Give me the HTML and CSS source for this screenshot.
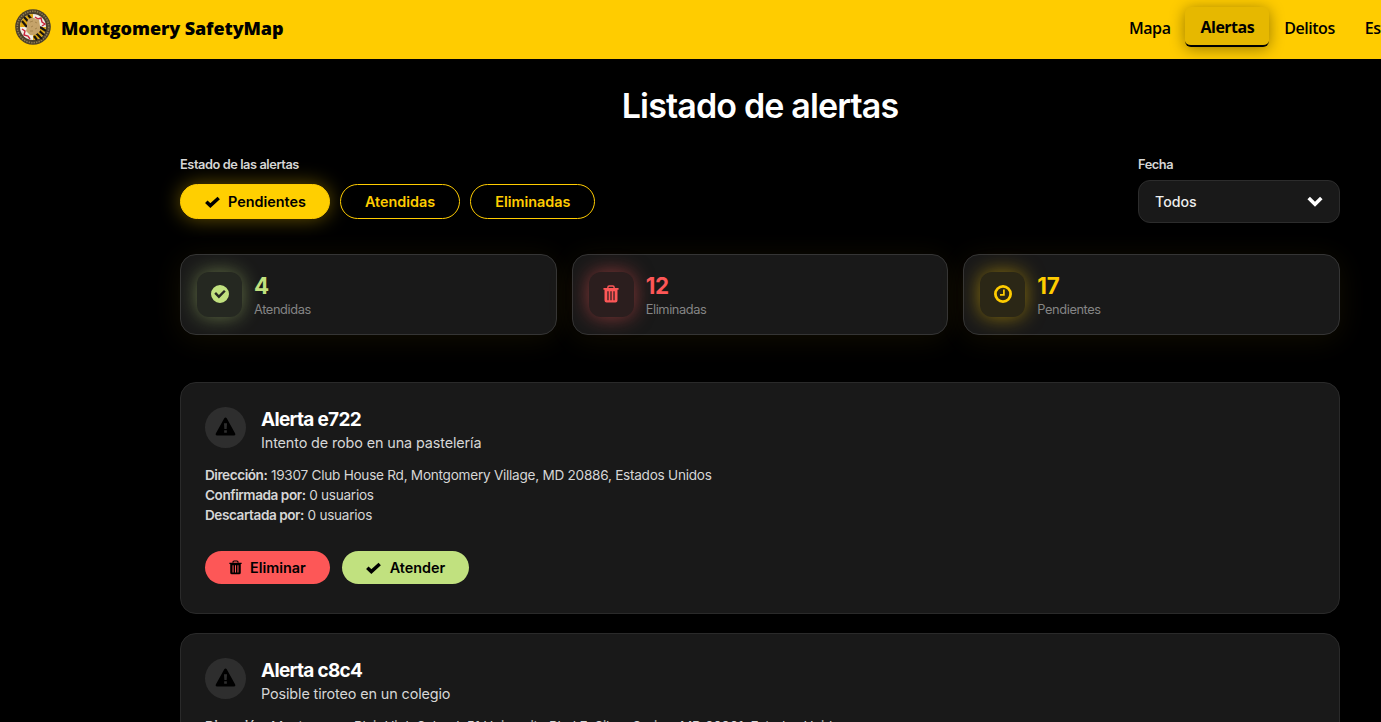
FILE: index.html
```html
<!DOCTYPE html>
<html lang="es">
<head>
    <meta charset="UTF-8">
    <meta name="viewport" content="width=device-width, initial-scale=1.0">
    <title>Montgomery SafetyMap</title>
    <link rel="stylesheet" href="styles.css">
</head>
<body>
    <!-- Iconos reutilizables -->
    <svg class="sprite" width="0" height="0">
        <symbol id="check" viewBox="0 0 14 11">
            <path d="M1.2 5.2 L5 8.8 L12.8 1.8" fill="none" stroke="currentColor" stroke-width="3.3"/>
        </symbol>
        <symbol id="trash" viewBox="0 0 18 20">
            <path d="M5.5 3.5 V2.4 Q5.5 1 7 1 H11 Q12.5 1 12.5 2.4 V3.5" fill="none" stroke="currentColor" stroke-width="1.6"/>
            <path fill="currentColor" fill-rule="evenodd" d="M.5 3.3 H17.5 V5.2 H16.3 V17.2 Q16.3 19.5 14 19.5 H4 Q1.7 19.5 1.7 17.2 V5.2 H.5Z M4.9 7 V17 H6.3 V7Z M8.3 7 V17 H9.7 V7Z M11.7 7 V17 H13.1 V7Z"/>
        </symbol>
        <symbol id="circle-check" viewBox="0 0 18 18">
            <path fill="currentColor" fill-rule="evenodd" d="M9 0 A9 9 0 1 1 9 18 A9 9 0 1 1 9 0Z M3.3 8.8 L7.9 13.4 L14.7 6.6 L13 4.9 L7.9 10 L5 7.1Z"/>
        </symbol>
        <symbol id="clock" viewBox="0 0 18 18">
            <circle cx="9" cy="9" r="7.6" fill="none" stroke="currentColor" stroke-width="2.8"/>
            <path d="M9.9 4.6 V9.8 H6" fill="none" stroke="currentColor" stroke-width="1.7"/>
        </symbol>
        <symbol id="warning" viewBox="0 0 22 20">
            <path fill="currentColor" fill-rule="evenodd" d="M11 .4 Q11.8 .4 12.3 1.3 L21.2 17.4 Q22 19.6 20 19.6 H2 Q0 19.6 .8 17.4 L9.7 1.3 Q10.2 .4 11 .4Z M9.4 6.5 L9.8 12.6 H12.2 L12.6 6.5Z M9.6 14 V16.6 H12.4 V14Z"/>
        </symbol>
    </svg>

    <header class="navbar">
        <div class="brand">
            <svg class="logo" viewBox="0 0 36 36">
                <circle cx="18" cy="18" r="17.8" fill="#4c402a"/>
                <circle cx="18" cy="18" r="15.7" fill="none" stroke="#8f7b52" stroke-width="1.6" stroke-dasharray="1.4 1.1"/>
                <circle cx="18" cy="18" r="13" fill="#f1ece2"/>
                <path d="M18 5 A13 13 0 0 0 5 18 H18Z" fill="#dba510"/>
                <path d="M18 18 H31 A13 13 0 0 1 18 31Z" fill="#dba510"/>
                <path d="M7 12 L12 18 M9 8 L18 18 M13 6 L18 12 M19 22 L27 30 M21 19 L29 26 M25 18 L31 22 M19 27 L22 31" stroke="#17130d" stroke-width="2.2"/>
                <path d="M20 8 L23 10 L26 9 L27 13 L30 15 L27 17 M7 20 L10 22 L9 26 L13 27 L15 30" fill="none" stroke="#c9243b" stroke-width="1.4"/>
                <path d="M12 13 Q14 8 19 9 L24 11 L25 17 L25 22 Q21 27 15 26 L11 22 L12 18Z" fill="#c5a36a"/>
                <path d="M15 13 L18 12 M20 13 L22 14 M16 18 L18 17 M20 20 L22 19 M15 22 L18 22" fill="none" stroke="#a5854e" stroke-width="1"/>
            </svg>
            <span class="brand-name">Montgomery SafetyMap</span>
        </div>
        <nav class="menu">
            <a class="link">Mapa</a>
            <a class="link active">Alertas</a>
            <a class="link">Delitos</a>
            <a class="link">Estadísticas</a>
        </nav>
    </header>

    <main class="container">
        <h1>Listado de alertas</h1>

        <div class="filters">
            <div>
                <p class="label">Estado de las alertas</p>
                <div class="tabs">
                    <button class="tab selected"><svg class="i-check"><use href="#check"/></svg>Pendientes</button>
                    <button class="tab">Atendidas</button>
                    <button class="tab">Eliminadas</button>
                </div>
            </div>
            <div class="date">
                <p class="label">Fecha</p>
                <div class="select">
                    <span>Todos</span>
                    <svg width="16" height="11" viewBox="0 0 16 11"><path d="M1.7 2 L8 8.2 L14.3 2" fill="none" stroke="#fff" stroke-width="3.6"/></svg>
                </div>
            </div>
        </div>

        <div class="stats">
            <div class="stat green">
                <div class="stat-icon"><svg width="18" height="18"><use href="#circle-check"/></svg></div>
                <div><div class="number">4</div><div class="name">Atendidas</div></div>
            </div>
            <div class="stat red">
                <div class="stat-icon"><svg width="16" height="18"><use href="#trash"/></svg></div>
                <div><div class="number">12</div><div class="name">Eliminadas</div></div>
            </div>
            <div class="stat yellow">
                <div class="stat-icon"><svg width="18" height="18"><use href="#clock"/></svg></div>
                <div><div class="number">17</div><div class="name">Pendientes</div></div>
            </div>
        </div>

        <section class="card">
            <div class="card-head">
                <div class="circle"><svg width="21" height="19"><use href="#warning"/></svg></div>
                <div class="card-title">
                    <h2>Alerta e722</h2>
                    <p class="desc">Intento de robo en una pastelería</p>
                </div>
            </div>
            <div class="info">
                <p><b>Dirección:</b> 19307 Club House Rd, Montgomery Village, MD 20886, Estados Unidos</p>
                <p><b>Confirmada por:</b> 0 usuarios</p>
                <p><b>Descartada por:</b> 0 usuarios</p>
            </div>
            <div class="actions">
                <button class="btn delete"><svg class="i-trash"><use href="#trash"/></svg>Eliminar</button>
                <button class="btn attend"><svg class="i-check"><use href="#check"/></svg>Atender</button>
            </div>
        </section>

        <section class="card">
            <div class="card-head">
                <div class="circle"><svg width="21" height="19"><use href="#warning"/></svg></div>
                <div class="card-title">
                    <h2>Alerta c8c4</h2>
                    <p class="desc">Posible tiroteo en un colegio</p>
                </div>
            </div>
            <div class="info">
                <p><b>Dirección:</b> Montgomery Blair High School, 51 University Blvd E, Silver Spring, MD 20901, Estados Unidos</p>
                <p><b>Confirmada por:</b> 0 usuarios</p>
                <p><b>Descartada por:</b> 0 usuarios</p>
            </div>
            <div class="actions">
                <button class="btn delete"><svg class="i-trash"><use href="#trash"/></svg>Eliminar</button>
                <button class="btn attend"><svg class="i-check"><use href="#check"/></svg>Atender</button>
            </div>
        </section>
    </main>
</body>
</html>
```

FILE: styles.css
```css
* {
    box-sizing: border-box;
    margin: 0;
    padding: 0;
}

html {
    height: 100%;
    overflow: hidden;
    background: #000;
}

body {
    width: 1520px;
    height: 100%;
    overflow: hidden;
    background: #000;
    color: #d6d6d6;
    font-family: Inter, sans-serif;
}

.sprite {
    position: absolute;
}

/* Barra superior */
.navbar {
    display: flex;
    align-items: center;
    height: 59px;
    padding: 0 15px;
    background: #ffcc00;
    color: #000;
    font-family: "Open Sans", sans-serif;
}

.brand {
    display: flex;
    align-items: center;
    gap: 10px;
    width: 1099px;
    padding-bottom: 5px;
}

.logo {
    width: 36px;
    height: 36px;
}

.brand-name {
    padding-top: 2px;
    font-size: 18px;
    font-weight: 800;
    letter-spacing: -0.1px;
}

.menu {
    display: flex;
    align-items: center;
    padding-bottom: 5px;
}

.link {
    padding: 9px 15px 7px;
    font-size: 16px;
    font-weight: 600;
    letter-spacing: -0.45px;
    line-height: 22px;
}

.active {
    height: 40px;
    background: #e6b800;
    border-bottom: 2px solid #000;
    border-radius: 6px;
    box-shadow: 0 2px 15px rgba(0, 0, 0, 0.4);
    font-weight: 700;
    letter-spacing: -0.5px;
}

.container {
    width: 1160px;
    margin: 0 auto;
}

h1 {
    margin-top: 26px;
    color: #fff;
    font-size: 34px;
    font-weight: 600;
    letter-spacing: -0.85px;
    line-height: 42px;
    text-align: center;
}

/* Filtros */
.filters {
    display: flex;
    justify-content: space-between;
    margin-top: 29px;
}

.label {
    font-size: 12.8px;
    font-weight: 600;
    letter-spacing: -0.43px;
    line-height: 18px;
}

.tabs {
    display: flex;
    gap: 10px;
    margin-top: 10px;
}

.tab {
    height: 35px;
    padding: 0 24px;
    background: transparent;
    border: 1px solid #ffcc00;
    border-radius: 18px;
    color: #ffcc00;
    font: 600 14.4px Inter, sans-serif;
}

.selected {
    display: flex;
    align-items: center;
    gap: 8px;
    padding: 0 23px 0 24px;
    background: #ffcf00;
    box-shadow: 0 0 20px rgba(255, 204, 0, 0.4);
    color: #000;
}

.i-check {
    width: 15px;
    height: 12px;
}

.i-trash {
    width: 13px;
    height: 15px;
}

.date {
    width: 202px;
}

.select {
    display: flex;
    align-items: center;
    justify-content: space-between;
    height: 43px;
    margin-top: 6px;
    padding: 0 16px;
    background: #191919;
    border: 1px solid #2c2c2c;
    border-radius: 12px;
    color: #eee;
    font-size: 14.2px;
    font-weight: 500;
}

/* Contadores */
.stats {
    display: grid;
    grid-template-columns: repeat(3, 1fr);
    gap: 15px;
    margin-top: 31px;
}

.stat {
    display: flex;
    align-items: center;
    gap: 12px;
    height: 81px;
    padding: 0 16px 1px;
    background: #191919;
    border: 1px solid #353535;
    border-radius: 16px;
    box-shadow: 0 4px 30px rgba(255, 204, 0, 0.07);
}

.stat-icon {
    display: flex;
    align-items: center;
    justify-content: center;
    width: 45px;
    height: 45px;
    border-radius: 12px;
}

.number {
    padding-top: 2px;
    font-size: 22.4px;
    font-weight: 700;
    letter-spacing: -0.2px;
    line-height: 27px;
}

.name {
    margin-top: 2px;
    color: #858585;
    font-size: 12.8px;
    letter-spacing: -0.4px;
    line-height: 18px;
}

.green { color: #c1e17f; }
.red { color: #fd5757; }
.yellow { color: #ffcc00; }

.green .stat-icon {
    background: #252821;
    box-shadow: 0 0 20px rgba(193, 225, 127, 0.45);
}

.red .stat-icon {
    background: #2b1e1e;
    box-shadow: 0 0 20px rgba(253, 87, 87, 0.5);
}

.yellow .stat-icon {
    background: #2b2716;
    box-shadow: 0 0 20px rgba(255, 204, 0, 0.5);
}

/* Tarjetas de alertas */
.card {
    height: 232px;
    margin-top: 19px;
    padding: 24px;
    background: #191919;
    border: 1px solid #2a2a2a;
    border-radius: 16px;
}

.stats + .card {
    margin-top: 47px;
}

.card-head {
    display: flex;
    align-items: center;
    gap: 15px;
    height: 41px;
}

.card-title {
    padding-top: 6px;
}

.circle {
    display: flex;
    align-items: center;
    justify-content: center;
    width: 41px;
    height: 41px;
    border-radius: 50%;
    background: #2e2e2e;
    color: #000;
}

.circle svg {
    margin-bottom: 3px;
}

h2 {
    color: #fff;
    font-size: 19px;
    font-weight: 700;
    letter-spacing: -0.7px;
    line-height: 24px;
}

.desc {
    font-size: 14.4px;
    letter-spacing: -0.12px;
    line-height: 22px;
}

.info {
    margin-top: 17px;
    font-size: 13.6px;
    letter-spacing: -0.26px;
    line-height: 20px;
}

.info b {
    font-weight: 600;
    letter-spacing: -0.45px;
}

.actions {
    display: flex;
    gap: 12px;
    margin-top: 26px;
}

.btn {
    display: flex;
    align-items: center;
    height: 33px;
    padding: 0 24px;
    border: none;
    border-radius: 17px;
    color: #000;
    font: 600 14.4px Inter, sans-serif;
}

.delete {
    gap: 8px;
    background: #fd5757;
}

.attend {
    gap: 9px;
    background: #c1e17f;
}
```
